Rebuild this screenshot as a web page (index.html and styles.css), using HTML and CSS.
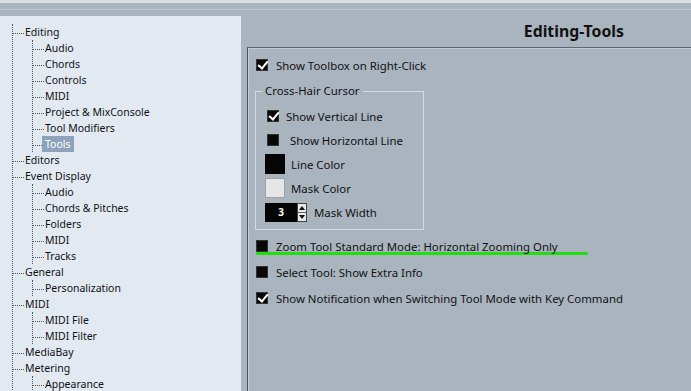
FILE: index.html
```html
<!DOCTYPE html>
<html lang="en">
<head>
	<meta charset="UTF-8">
	<title>Preferences - Editing-Tools</title>
	<link rel="stylesheet" href="styles.css">
</head>
<body>
	<div class="topbar"></div>
	<div class="main">
		<div class="tree">
			<ul class="lvl1">
				<li><span class="item">Editing</span>
					<ul class="lvl2">
						<li><span class="item">Audio</span></li>
						<li><span class="item">Chords</span></li>
						<li><span class="item">Controls</span></li>
						<li><span class="item">MIDI</span></li>
						<li><span class="item">Project &amp; MixConsole</span></li>
						<li><span class="item">Tool Modifiers</span></li>
						<li><span class="item"><b class="sel">Tools</b></span></li>
					</ul>
				</li>
				<li><span class="item">Editors</span></li>
				<li><span class="item">Event Display</span>
					<ul class="lvl2">
						<li><span class="item">Audio</span></li>
						<li><span class="item">Chords &amp; Pitches</span></li>
						<li><span class="item">Folders</span></li>
						<li><span class="item">MIDI</span></li>
						<li><span class="item">Tracks</span></li>
					</ul>
				</li>
				<li><span class="item">General</span>
					<ul class="lvl2">
						<li><span class="item">Personalization</span></li>
					</ul>
				</li>
				<li><span class="item">MIDI</span>
					<ul class="lvl2">
						<li><span class="item">MIDI File</span></li>
						<li><span class="item">MIDI Filter</span></li>
					</ul>
				</li>
				<li><span class="item">MediaBay</span></li>
				<li><span class="item">Metering</span>
					<ul class="lvl2">
						<li><span class="item">Appearance</span></li>
					</ul>
				</li>
			</ul>
		</div>
		<div class="gap"></div>
		<div class="page">
			<div class="title">Editing-Tools</div>
			<div class="content">
				<div class="row first"><span class="cb on"></span>Show Toolbox on Right-Click</div>
				<fieldset class="group">
					<legend>Cross-Hair Cursor</legend>
					<div class="grow"><span class="cb on"></span>Show Vertical Line</div>
					<div class="grow horiz"><span class="cb"></span>Show Horizontal Line</div>
					<div class="grow"><span class="swatch black"></span>Line Color</div>
					<div class="grow"><span class="swatch light"></span>Mask Color</div>
					<div class="grow">
						<span class="spin"><span class="num">3</span><span class="arrows"><i class="up"></i><i class="down"></i></span></span>
						Mask Width
					</div>
				</fieldset>
				<div class="row zoom"><span class="cb"></span>Zoom Tool Standard Mode: Horizontal Zooming Only</div>
				<div class="mark"></div>
				<div class="row"><span class="cb"></span>Select Tool: Show Extra Info</div>
				<div class="row"><span class="cb on"></span>Show Notification when Switching Tool Mode with Key Command</div>
			</div>
		</div>
	</div>
</body>
</html>
```

FILE: styles.css
```css
*{
	margin: 0px;
	padding: 0px;
	list-style: none;
	box-sizing: border-box;
}
html,body{
	width: 691px;
	height: 391px;
	overflow: hidden;
}
body{
	background-color: #a9b4bf;
	font-family: "Noto Sans", "Open Sans", sans-serif;
	font-size: 11.4px;
	color: #111;
}
.topbar{
	height: 16px;
	border-top: 3px solid #d7dde3;
	background: linear-gradient(#a9b4bf 0, #a9b4bf 6px, #bcc6cf 6px, #bcc6cf 7px, #a9b4bf 7px);
}
.main{
	display: flex;
	height: 375px;
}
.tree{
	width: 241px;
	background-color: #e3e9f1;
	padding-top: 8px;
	font-size: 10.5px;
	overflow: hidden;
}
.lvl1{
	margin-left: 12px;
	border-left: 1px dotted #555;
	padding-bottom: 20px;
}
.lvl2{
	margin-left: 19px;
	border-left: 1px dotted #555;
}
.item{
	display: block;
	height: 16px;
	line-height: 16px;
	white-space: nowrap;
}
.item:before{
	content: '';
	display: inline-block;
	width: 11px;
	border-top: 1px dotted #555;
	vertical-align: middle;
	margin-right: 1px;
}
.sel{
	font-weight: normal;
	background-color: #8da3bb;
	color: #fff;
	padding: 1px 3px;
	margin-left: -3px;
}
.gap{
	width: 6px;
}
.page{
	flex: 1;
	display: flex;
	flex-direction: column;
}
.title{
	height: 31px;
	line-height: 30px;
	text-align: right;
	padding-right: 67px;
	font-size: 15.8px;
	font-weight: bold;
}
.content{
	flex: 1;
	border-top: 1px solid #5d6873;
	border-left: 1px solid #4a5560;
	box-shadow: inset 1px 1px 0 #c4ccd4;
	padding-left: 8px;
}
.row{
	display: flex;
	align-items: center;
	height: 26px;
}
.row.first{
	margin-top: 4px;
}
.cb{
	width: 12px;
	height: 12px;
	background-color: #080808;
	border: 1px solid #333;
	margin-right: 8px;
	position: relative;
}
.cb.on:after{
	content: '';
	position: absolute;
	left: 3px;
	top: -1px;
	width: 4px;
	height: 8px;
	border-right: 2.5px solid #fff;
	border-bottom: 2.5px solid #fff;
	transform: rotate(40deg);
}
.group{
	width: 169px;
	margin-top: 7px;
	margin-left: -1px;
	border: 1px solid #d3d9df;
	padding: 7px 0 5px 9px;
}
.group legend{
	padding: 0 3px;
	margin-left: -3px;
	line-height: 12px;
}
.grow{
	display: flex;
	align-items: center;
	height: 24px;
}
.grow .cb{
	margin-left: 2px;
	margin-right: 7px;
}
.horiz .cb{
	margin-right: 11px;
}
.swatch{
	width: 20px;
	height: 20px;
	margin-right: 6px;
}
.swatch.black{
	background-color: #050505;
}
.swatch.light{
	background-color: #e6e6e6;
	border: 1px solid #9aa3ab;
}
.spin{
	display: flex;
	height: 19px;
	margin-right: 7px;
}
.num{
	width: 32px;
	background-color: #050505;
	color: #fff;
	font-weight: bold;
	font-size: 10px;
	text-align: center;
	line-height: 19px;
}
.arrows{
	width: 10px;
	display: flex;
	flex-direction: column;
	background-color: #e8e8e8;
	border: 1px solid #444;
}
.arrows i{
	flex: 1;
	display: flex;
	align-items: center;
	justify-content: center;
}
.arrows i:after{
	content: '';
	border-left: 3px solid transparent;
	border-right: 3px solid transparent;
}
.arrows .up:after{
	border-bottom: 4px solid #111;
}
.arrows .down{
	border-top: 1px solid #666;
}
.arrows .down:after{
	border-top: 4px solid #111;
}
.row.zoom{
	margin-top: 3px;
}
.mark{
	width: 332px;
	height: 3px;
	margin-top: -7px;
	margin-bottom: 4px;
	background-color: #22dd10;
	border-radius: 2px;
}
```
